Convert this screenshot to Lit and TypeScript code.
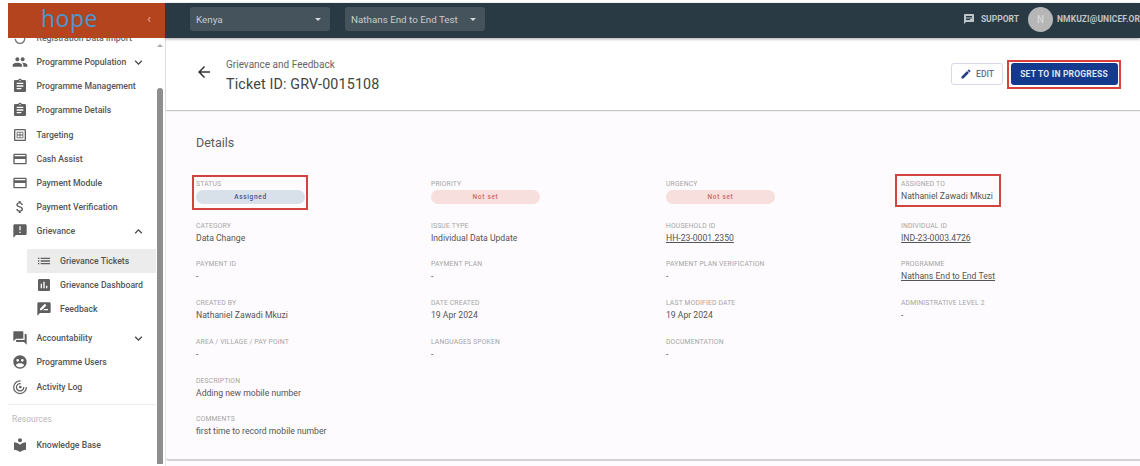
import { LitElement, html, css, svg } from "lit";
import { customElement } from "lit/decorators.js";

const P: Record<string, string> = {
  people: "M16 11c1.66 0 2.99-1.34 2.99-3S17.66 5 16 5s-3 1.34-3 3 1.34 3 3 3zm-8 0c1.66 0 2.99-1.34 2.99-3S9.66 5 8 5 5 6.34 5 8s1.34 3 3 3zm0 2c-2.33 0-7 1.17-7 3.5V19h14v-2.5C15 14.17 10.33 13 8 13zm8 0c-.29 0-.62.02-.97.05 1.16.84 1.97 1.97 1.97 3.45V19h6v-2.5c0-2.33-4.67-3.5-7-3.5z",
  clip: "M19 3h-4.18C14.4 1.84 13.3 1 12 1s-2.4.84-2.82 2H5c-1.1 0-2 .9-2 2v14c0 1.1.9 2 2 2h14c1.1 0 2-.9 2-2V5c0-1.1-.9-2-2-2zm-7 0c.55 0 1 .45 1 1s-.45 1-1 1-1-.45-1-1 .45-1 1-1zm2 14H7v-2h7v2zm3-4H7v-2h10v2zm0-4H7V7h10v2z",
  target: "M19 3H5c-1.1 0-2 .9-2 2v14c0 1.1.9 2 2 2h14c1.1 0 2-.9 2-2V5c0-1.1-.9-2-2-2zm0 16H5V5h14v14zM7 7h10v10H7V7zm1.200 1.200v3.200h3.200V8.200H8.200zm4.400 0v3.200h3.200V8.200h-3.200zM8.200 12.600v3.200h3.200v-3.200H8.200zm4.400 0v3.200h3.200v-3.200h-3.200z",
  card: "M20 4H4c-1.11 0-1.99.89-1.99 2L2 18c0 1.11.89 2 2 2h16c1.11 0 2-.89 2-2V6c0-1.11-.89-2-2-2zm0 14H4v-6h16v6zm0-10H4V6h16v2z",
  dollar: "M11.8 10.9c-2.27-.59-3-1.2-3-2.15 0-1.09 1.01-1.85 2.7-1.85 1.78 0 2.44.85 2.5 2.1h2.21c-.07-1.72-1.12-3.3-3.21-3.81V3h-3v2.16c-1.94.42-3.5 1.68-3.5 3.61 0 2.31 1.91 3.46 4.7 4.13 2.5.6 3 1.48 3 2.41 0 .69-.49 1.79-2.7 1.79-2.06 0-2.87-.92-2.98-2.1h-2.2c.12 2.19 1.76 3.42 3.68 3.83V21h3v-2.15c1.95-.37 3.5-1.5 3.5-3.55 0-2.84-2.43-3.81-4.7-4.4z",
  alert: "M20 2H4c-1.1 0-1.99.9-1.99 2L2 22l4-4h14c1.1 0 2-.9 2-2V4c0-1.1-.9-2-2-2zm-7 9h-2V5h2v6zm0 4h-2v-2h2v2z",
  list: "M3 13h2v-2H3v2zm0 4h2v-2H3v2zm0-8h2V7H3v2zm4 4h14v-2H7v2zm0 4h14v-2H7v2zM7 7v2h14V7H7z",
  chart: "M19 3H5c-1.1 0-2 .9-2 2v14c0 1.1.9 2 2 2h14c1.1 0 2-.9 2-2V5c0-1.1-.9-2-2-2zM9 17H7v-7h2v7zm4 0h-2V7h2v10zm4 0h-2v-4h2v4z",
  feedback: "M20 2H4c-1.1 0-1.99.9-1.99 2L2 22l4-4h14c1.1 0 2-.9 2-2V4c0-1.1-.9-2-2-2zM6 14v-2.47l6.88-6.88c.2-.2.51-.2.71 0l1.77 1.77c.2.2.2.51 0 .71L8.47 14H6zm12 0h-7.5l2-2H18v2z",
  forum: "M21 6h-2v9H6v2c0 .55.45 1 1 1h11l4 4V7c0-.55-.45-1-1-1zm-4 6V3c0-.55-.45-1-1-1H3c-.55 0-1 .45-1 1v14l4-4h10c.55 0 1-.45 1-1z",
  users: "M12 2C6.48 2 2 6.48 2 12s4.48 10 10 10 10-4.48 10-10S17.52 2 12 2zM8.500 7.500a2 2 0 110 4 2 2 0 010-4zm7 0a2 2 0 110 4 2 2 0 010-4zM12 20c-2.600 0-4.900-1.300-6.300-3.200C6.600 15 9.600 14 12 14s5.400 1 6.300 2.800C16.900 18.700 14.600 20 12 20z",
  book: "M12 11.550C9.640 9.350 6.480 8 3 8v11c3.480 0 6.640 1.350 9 3.550 2.360-2.190 5.520-3.550 9-3.550V8c-3.480 0-6.640 1.350-9 3.550zM12 8c1.660 0 3-1.340 3-3s-1.340-3-3-3-3 1.340-3 3 1.340 3 3 3z",
  chat: "M20 2H4c-1.100 0-2 .9-2 2v18l4-4h14c1.100 0 2-.9 2-2V4c0-1.100-.9-2-2-2zM6 9h12v2H6V9zm8 5H6v-2h8v2zm4-6H6V6h12v2z",
  edit: "M3 17.250V21h3.750L17.810 9.940l-3.750-3.750L3 17.250zM20.710 7.040c.39-.39.39-1.020 0-1.410l-2.340-2.340c-.39-.39-1.020-.39-1.410 0l-1.830 1.830 3.750 3.750 1.830-1.830z",
  back: "M20 11H7.830l5.590-5.590L12 4l-8 8 8 8 1.410-1.410L7.830 13H20v-2z",
  down: "M7.410 8.590L12 13.170l4.590-4.580L18 10l-6 6-6-6 1.410-1.410z",
  up: "M7.410 15.410L12 10.830l4.590 4.580L18 14l-6-6-6 6 1.410 1.410z",
  reg: "M12 5V1L7 6l5 5V7c3.310 0 6 2.690 6 6s-2.690 6-6 6-6-2.690-6-6H4c0 4.420 3.580 8 8 8s8-3.580 8-8-3.580-8-8-8z",
};

const icon = (name: string, size = 16) => html`<svg class="i" width=${size} height=${size} viewBox="0 0 24 24" fill="currentColor" fill-rule="evenodd">${svg`<path d=${P[name]}></path>`}</svg>`;
const radar = html`<svg class="i" width="16" height="16" viewBox="0 0 24 24" fill="none" stroke="currentColor" stroke-width="1.800"><path d="M13 3a9.500 9.500 0 1 0 8.500 9"></path><path d="M13 7a5.500 5.500 0 1 0 4.600 5"></path><circle cx="12.500" cy="12" r="2" fill="currentColor" stroke="none"></circle></svg>`;

type Nav = { label: string; ic: string; chev?: string; active?: boolean };
const NAV: Nav[] = [
  { label: "Programme Population", ic: "people", chev: "down" },
  { label: "Programme Management", ic: "clip" },
  { label: "Programme Details", ic: "clip" },
  { label: "Targeting", ic: "target" },
  { label: "Cash Assist", ic: "card" },
  { label: "Payment Module", ic: "card" },
  { label: "Payment Verification", ic: "dollar" },
  { label: "Grievance", ic: "alert", chev: "up" },
];
const SUB: Nav[] = [
  { label: "Grievance Tickets", ic: "list", active: true },
  { label: "Grievance Dashboard", ic: "chart" },
  { label: "Feedback", ic: "feedback" },
];
const NAV2: Nav[] = [
  { label: "Accountability", ic: "forum", chev: "down" },
  { label: "Programme Users", ic: "users" },
  { label: "Activity Log", ic: "radar" },
];

type F = { l: string; v?: string; link?: boolean; chip?: string; box?: boolean };
const ROWS: F[][] = [
  [{ l: "STATUS", chip: "blue", v: "Assigned", box: true }, { l: "PRIORITY", chip: "red", v: "Not set" }, { l: "URGENCY", chip: "red", v: "Not set" }, { l: "ASSIGNED TO", v: "Nathaniel Zawadi Mkuzi", box: true }],
  [{ l: "CATEGORY", v: "Data Change" }, { l: "ISSUE TYPE", v: "Individual Data Update" }, { l: "HOUSEHOLD ID", v: "HH-23-0001.2350", link: true }, { l: "INDIVIDUAL ID", v: "IND-23-0003.4726", link: true }],
  [{ l: "PAYMENT ID", v: "-" }, { l: "PAYMENT PLAN", v: "-" }, { l: "PAYMENT PLAN VERIFICATION", v: "-" }, { l: "PROGRAMME", v: "Nathans End to End Test", link: true }],
  [{ l: "CREATED BY", v: "Nathaniel Zawadi Mkuzi" }, { l: "DATE CREATED", v: "19 Apr 2024" }, { l: "LAST MODIFIED DATE", v: "19 Apr 2024" }, { l: "ADMINISTRATIVE LEVEL 2", v: "-" }],
  [{ l: "AREA / VILLAGE / PAY POINT", v: "-" }, { l: "LANGUAGES SPOKEN", v: "-" }, { l: "DOCUMENTATION", v: "-" }],
  [{ l: "DESCRIPTION", v: "Adding new mobile number" }],
  [{ l: "COMMENTS", v: "first time to record mobile number" }],
];

@customElement("app-root")
export class AppRoot extends LitElement {
  static styles = css`
    :host { display: block; width: 1140px; height: 466px; overflow: hidden; background: #fff; font-family: Roboto, "Liberation Sans", sans-serif; color: #4a4a4a; }
    * { box-sizing: border-box; }
    .i { flex: none; display: block; }
    .app { display: grid; grid-template-columns: 165px 1fr; grid-template-rows: 35px 1fr; height: 463px; margin-top: 3px; }

    .brand { margin-left: 8px; background: #b4441e; display: flex; align-items: center; padding-left: 33px; position: relative; z-index: 2; }
    .logo { font-family: "Open Sans", "Liberation Sans", sans-serif; font-size: 23px; line-height: 24px; color: #4c97d0; letter-spacing: 0.5px; width: 70px; padding-bottom: 5px; }
    .collapse { margin-left: 36px; color: #e09a7e; font-size: 13px; line-height: 12px; font-weight: 700; padding-bottom: 3px; }

    .top { background: #2a3a44; display: flex; align-items: center; padding: 0 0 3px 25px; box-shadow: 0 1px 3px rgba(0,0,0,.35); position: relative; z-index: 1; color: #cfd4d7; }
    .sel { height: 24px; background: #45535c; border-radius: 3px; display: flex; align-items: center; justify-content: space-between; font-size: 9.800px; color: #c6cccf; padding: 0 9px 0 6px; width: 140px; }
    .sel.a { margin-right: 15px; }
    .caret { width: 0; height: 0; border: 3px solid transparent; border-top: 3.500px solid #d5d9db; border-bottom: 0; }
    .right { margin-left: auto; display: flex; align-items: center; font-weight: 700; font-size: 8.500px; color: #bfc5c8; white-space: nowrap; }
    .sup { display: flex; align-items: center; gap: 5.500px; margin-right: 9px; }
    .av { width: 25px; height: 25px; border-radius: 50%; background: #b6b6b6; color: #d6d6d6; display: flex; align-items: center; justify-content: center; font-size: 10px; font-weight: 500; margin-right: 4px; }
    .mail { width: 83px; overflow: hidden; letter-spacing: .1px; }

    .side { position: relative; padding-left: 12px; overflow: hidden; font-size: 8.700px; font-weight: 500; color: #555; background: #fff; }
    .cut { display: flex; align-items: center; height: 24px; margin-top: -12px; white-space: nowrap; color: #666; }
    .cut .ic { width: 24.500px; display: flex; color: #777; }
    .row { display: flex; align-items: center; height: 24.200px; white-space: nowrap; color: #555; }
    .row .i { color: #5f5f5f; }
    .row .ic { width: 24.500px; display: flex; }
    .chev { position: absolute; left: 131px; }
    .row .chev .i { color: #444; }
    .sub { margin: 5px 9px 5px 15px; }
    .sub .row { padding-left: 9px; }
    .sub .row .ic { width: 24px; }
    .sub .active { background: #ececec; }
    .track { position: absolute; top: 0; bottom: 2px; left: 157px; width: 6px; }
    .thumb { position: absolute; left: 0; top: 50px; bottom: 0; width: 6px; background: #8e8e8e; border-radius: 3px 3px 0 0; }
    .arr { position: absolute; top: 6px; left: 0; width: 0; height: 0; border: 3px solid transparent; border-bottom: 3px solid #aaa; border-top: 0; }
    .hr { height: 1px; background: #eeeeee; margin: 5px 9px 9px -4px; }
    .res { font-size: 8.500px; line-height: 10px; font-weight: 400; color: #b9b9b9; margin-bottom: 9px; }

    .main { background: #fdfbfd; display: flex; flex-direction: column; min-width: 0; border-left: 1px solid #e6e6e6; }
    .head { height: 72px; flex: none; background: #fff; display: flex; align-items: center; padding: 2px 19px 0 29px; box-shadow: 0 1px 1px rgba(0,0,0,.22); position: relative; }
    .back { color: #333; margin-right: 13px; margin-bottom: 6px; }
    .crumb { font-size: 10px; color: #666; margin-bottom: 6px; }
    .title { font-size: 14.300px; color: #444; letter-spacing: .15px; }
    .acts { margin-left: auto; display: flex; align-items: center; gap: 4px; margin-top: -2px; }
    .edit { width: 52px; height: 22px; border: 1px solid #d6dae4; border-radius: 3px; background: #fff; display: flex; align-items: center; justify-content: center; gap: 4px; font-size: 8.500px; font-weight: 500; color: #5f6f90; }
    .edit .i { color: #1f3c88; }
    .redbtn { border: 2px solid #d9423a; padding: 1.500px; }
    .go { width: 107px; height: 22px; background: #143a8e; border-radius: 3px; color: #dfe5f2; font-size: 8.500px; font-weight: 700; letter-spacing: .2px; display: flex; align-items: center; justify-content: center; }

    .card { flex: 1; background: #fdfbfd; padding: 25px 0 0 30px; border-bottom: 2px solid #d2d2d2; margin-bottom: 5px; border-radius: 0 0 0 3px; }
    .h { font-size: 12.500px; line-height: 15px; color: #5a5a5a; margin-bottom: 29px; }
    .gridrow { display: grid; grid-template-columns: repeat(4, 235px); height: 38.800px; }
    .gridrow.first { height: 41.500px; }
    .f { position: relative; }
    .lab { font-size: 6.800px; line-height: 10px; color: #a5a5a5; letter-spacing: .15px; white-space: nowrap; }
    .val { font-size: 8.650px; line-height: 14px; color: #555; white-space: nowrap; }
    .val.link { text-decoration: underline; }
    .chip { width: 109px; height: 14px; border-radius: 7px; margin-top: 1px; font-size: 6.500px; font-weight: 500; letter-spacing: .7px; display: flex; align-items: center; justify-content: center; }
    .blue { background: #d8e0ea; color: #44548a; }
    .red { background: #f6dfdc; color: #cf6a6a; }
    .box { position: absolute; border: 2px solid #d0463f; pointer-events: none; }
    .box.s { left: -4px; top: -4px; width: 116px; height: 35px; }
    .box.a { left: -6px; top: -5px; width: 106px; height: 33px; }
  `;

  private navRow(n: Nav) {
    return html`<div class="row ${n.active ? "active" : ""}">
      <span class="ic">${n.ic === "radar" ? radar : icon(n.ic)}</span>${n.label}
      ${n.chev ? html`<span class="chev">${icon(n.chev, 15)}</span>` : ""}
    </div>`;
  }

  private field(f: F) {
    return html`<div class="f">
      ${f.box ? html`<span class="box ${f.chip ? "s" : "a"}"></span>` : ""}
      <div class="lab">${f.l}</div>
      ${f.chip
        ? html`<div class="chip ${f.chip}">${f.v}</div>`
        : html`<div class="val ${f.link ? "link" : ""}">${f.v}</div>`}
    </div>`;
  }

  render() {
    return html`<div class="app">
      <div class="brand"><span class="logo">hope</span><span class="collapse">‹</span></div>
      <div class="top">
        <div class="sel a">Kenya<span class="caret"></span></div>
        <div class="sel b">Nathans End to End Test<span class="caret"></span></div>
        <div class="right">
          <span class="sup">${icon("chat", 12)}SUPPORT</span>
          <span class="av">N</span>
          <span class="mail">NMKUZI@UNICEF.ORG</span>
        </div>
      </div>
      <aside class="side">
        <div class="cut"><span class="ic">${icon("reg")}</span>Registration Data Import</div>
        ${NAV.map((n) => this.navRow(n))}
        <div class="sub">${SUB.map((n) => this.navRow(n))}</div>
        ${NAV2.map((n) => this.navRow(n))}
        <div class="hr"></div>
        <div class="res">Resources</div>
        ${this.navRow({ label: "Knowledge Base", ic: "book" })}
        <div class="track"><span class="arr"></span><span class="thumb"></span></div>
      </aside>
      <main class="main">
        <div class="head">
          <span class="back">${icon("back", 18)}</span>
          <div>
            <div class="crumb">Grievance and Feedback</div>
            <div class="title">Ticket ID: GRV-0015108</div>
          </div>
          <div class="acts">
            <div class="edit">${icon("edit", 12)}EDIT</div>
            <div class="redbtn"><div class="go">SET TO IN PROGRESS</div></div>
          </div>
        </div>
        <section class="card">
          <div class="h">Details</div>
          ${ROWS.map((r, i) => html`<div class="gridrow ${i === 0 ? "first" : ""}">${r.map((f) => this.field(f))}</div>`)}
        </section>
      </main>
    </div>`;
  }
}
